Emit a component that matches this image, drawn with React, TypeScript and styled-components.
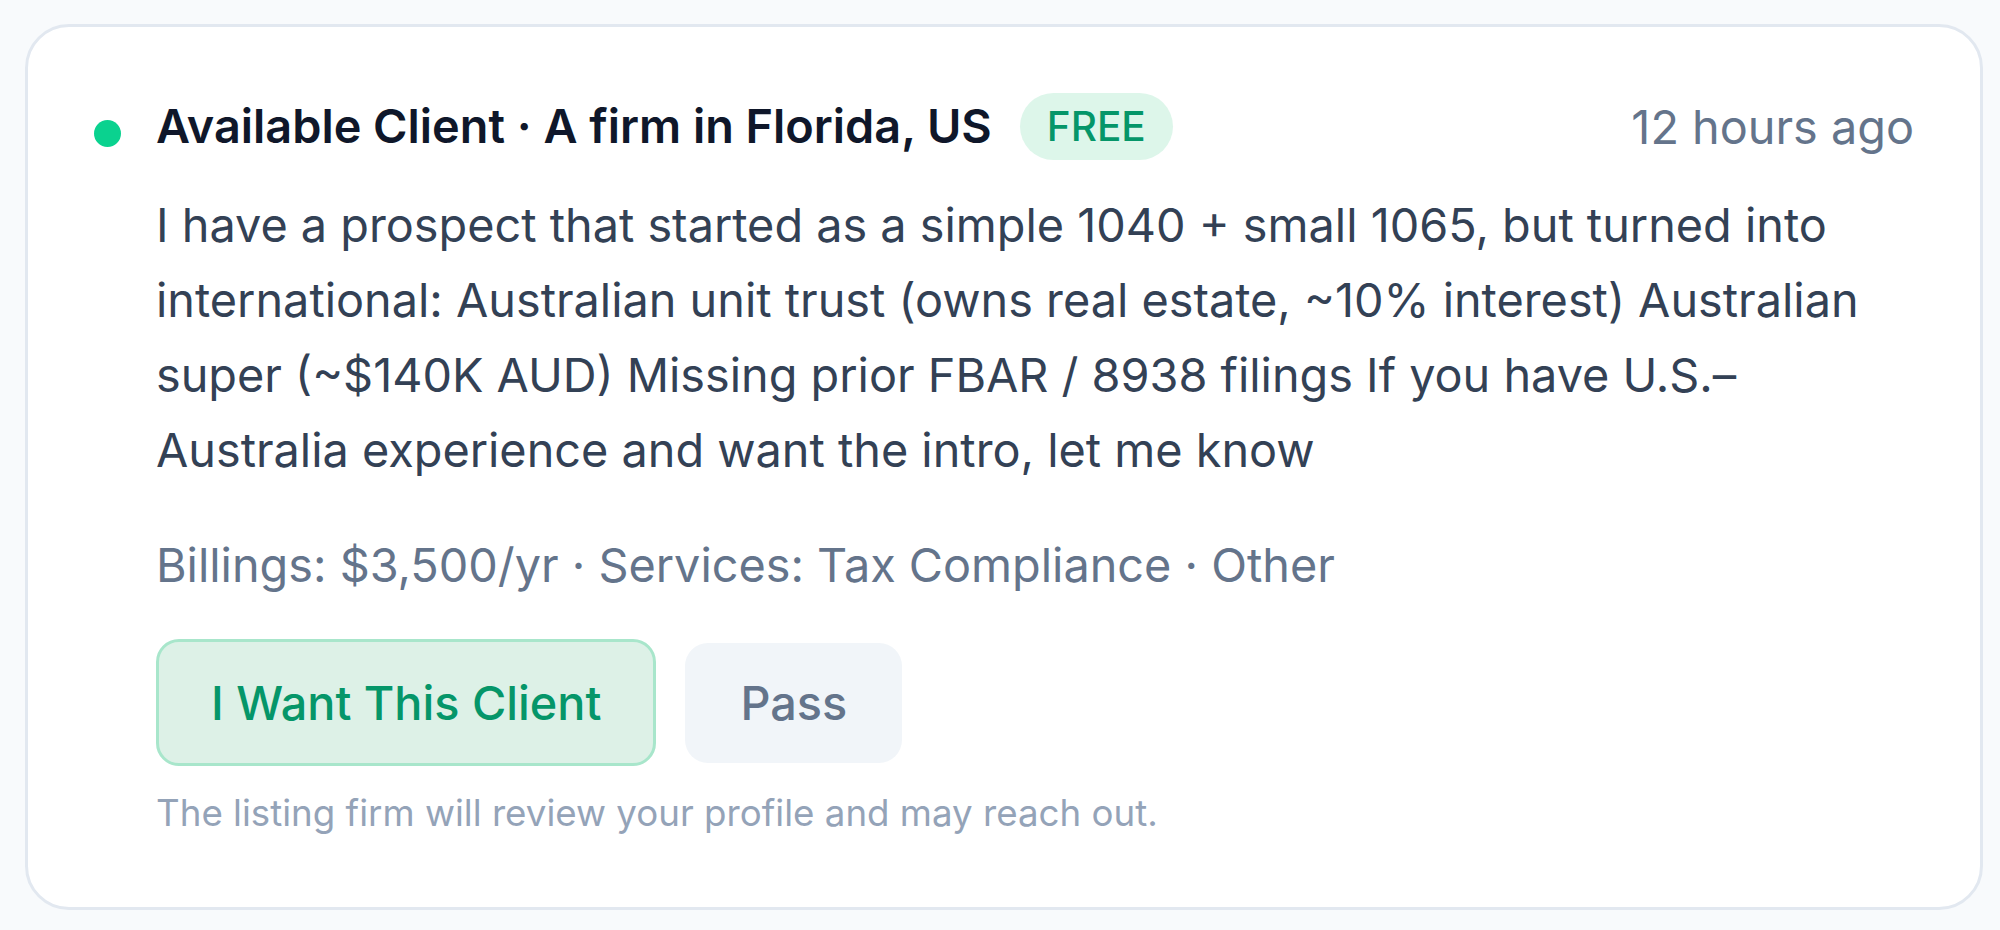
import React from 'react';
import styled, {createGlobalStyle} from 'styled-components';

const GlobalStyle = createGlobalStyle`
	html, body {
		margin: 0;
		padding: 0;
		background: #f8fafc;
	}

	body {
		font-family: Inter, 'Noto Sans', 'Liberation Sans', sans-serif;
		-webkit-font-smoothing: antialiased;
	}
`;

const Page = styled.div`
	padding: 24px 17px 20px 25px;
`;

const Card = styled.article`
	display: flex;
	align-items: flex-start;
	gap: 35px;
	padding: 66px;
	background: #fff;
	border: 3px solid #e2e8f0;
	border-radius: 44px;
`;

const Dot = styled.span`
	flex: none;
	width: 27px;
	height: 27px;
	margin-top: 27px;
	border-radius: 50%;
	background: #0ad28f;
`;

const Body = styled.div`
	flex: 1;
	min-width: 0;
	display: flex;
	flex-direction: column;
`;

const Header = styled.header`
	display: flex;
	align-items: center;
	gap: 28px;
	height: 67px;
`;

const Title = styled.h2`
	margin: 0;
	font-size: 46.8px;
	font-weight: 600;
	line-height: 67px;
	color: #0f172a;
	white-space: nowrap;
`;

const Badge = styled.span`
	display: inline-flex;
	align-items: center;
	height: 67px;
	padding: 0 27px;
	border-radius: 999px;
	background: #ddf6ea;
	color: #059669;
	font-size: 40.5px;
	font-weight: 500;
`;

const Time = styled.time`
	margin-left: auto;
	font-size: 46.8px;
	color: #64748b;
	white-space: nowrap;
`;

const Description = styled.p`
	margin: 28px 0 0;
	font-size: 46.8px;
	line-height: 75px;
	color: #334155;
`;

const Meta = styled.p`
	margin: 43px 0 0;
	font-size: 46.8px;
	line-height: 69px;
	color: #64748b;
`;

const Actions = styled.div`
	display: flex;
	align-items: center;
	gap: 29px;
	margin-top: 39px;
`;

type ButtonProps = {
	$primary?: boolean;
};

const Button = styled.button<ButtonProps>`
	display: inline-flex;
	align-items: center;
	justify-content: center;
	height: ${(p) => (p.$primary ? '127px' : '120px')};
	padding: 0 ${(p) => (p.$primary ? '52px' : '55px')};
	border: ${(p) => (p.$primary ? '3px solid #a8e6cb' : 'none')};
	border-radius: 23px;
	background: ${(p) => (p.$primary ? '#ddf1e7' : '#f1f5f9')};
	color: ${(p) => (p.$primary ? '#059669' : '#64748b')};
	font-family: inherit;
	font-size: 46.8px;
	font-weight: 500;
	cursor: pointer;
`;

const Note = styled.p`
	margin: 19px 0 0;
	font-size: 36.7px;
	line-height: 56px;
	color: #94a3b8;
`;

const listing = {
	title: 'Available Client · A firm in Florida, US',
	posted: '12 hours ago',
	description:
		'I have a prospect that started as a simple 1040 + small 1065, but turned into international: Australian unit trust (owns real estate, ~10% interest) Australian super (~$140K AUD) Missing prior FBAR / 8938 filings If you have U.S.–Australia experience and want the intro, let me know',
	billings: '$3,500/yr',
	services: ['Tax Compliance', 'Other']
};

const App = () => {
	return (
		<>
			<GlobalStyle />
			<Page>
				<Card>
					<Dot />
					<Body>
						<Header>
							<Title>{listing.title}</Title>
							<Badge>FREE</Badge>
							<Time>{listing.posted}</Time>
						</Header>
						<Description>{listing.description}</Description>
						<Meta>
							Billings: {listing.billings} · Services: {listing.services.join(' · ')}
						</Meta>
						<Actions>
							<Button $primary>I Want This Client</Button>
							<Button>Pass</Button>
						</Actions>
						<Note>The listing firm will review your profile and may reach out.</Note>
					</Body>
				</Card>
			</Page>
		</>
	);
};

export default App;
